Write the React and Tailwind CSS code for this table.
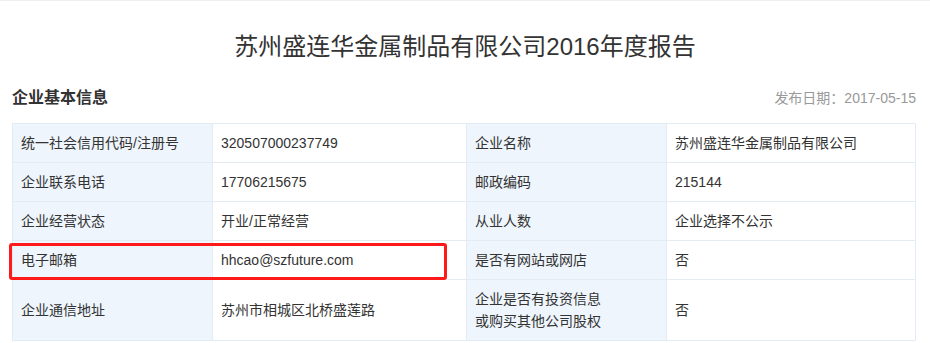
import React from "react";

const rows = [
  ["统一社会信用代码/注册号", "320507000237749", "企业名称", "苏州盛连华金属制品有限公司"],
  ["企业联系电话", "17706215675", "邮政编码", "215144"],
  ["企业经营状态", "开业/正常经营", "从业人数", "企业选择不公示"],
  ["电子邮箱", "hhcao@szfuture.com", "是否有网站或网店", "否"],
];

const label = "bg-[#eef5fc] border-r border-b border-[#e3ebf3] px-2 flex items-center";
const value = "bg-white border-r border-b border-[#e3ebf3] px-2 flex items-center";

export default function App() {
  return (
    <div className="min-h-screen bg-white border-t border-[#eeeeee] text-[#333] font-['Liberation_Sans','Noto_Sans_CJK_SC',sans-serif]">
      <h1 className="pt-[30px] text-center text-[24px] leading-[32px] font-normal">
        苏州盛连华金属制品有限公司2016年度报告
      </h1>

      <div className="mx-[12px] w-[904px] mt-[23px] mb-[13px] flex items-center justify-between h-[24px]">
        <h2 className="text-[16px] font-bold">企业基本信息</h2>
        <span className="text-[14px] text-[#999]">发布日期：2017-05-15</span>
      </div>

      <div className="relative ml-[12px] w-[904px] border-t border-l border-[#e3ebf3] grid grid-cols-[200px_254px_200px_249px] text-[14px]">
        {rows.map((r, i) => (
          <React.Fragment key={i}>
            <div className={`${label} h-[39px]`}>{r[0]}</div>
            <div className={`${value} h-[39px]`}>{r[1]}</div>
            <div className={`${label} h-[39px]`}>{r[2]}</div>
            <div className={`${value} h-[39px]`}>{r[3]}</div>
          </React.Fragment>
        ))}
        <div className={`${label} h-[61px]`}>企业通信地址</div>
        <div className={`${value} h-[61px]`}>苏州市相城区北桥盛莲路</div>
        <div className={`${label} h-[61px] leading-[22px]`}>
          企业是否有投资信息
          <br />
          或购买其他公司股权
        </div>
        <div className={`${value} h-[61px]`}>否</div>

        {/* highlight box around the email row */}
        <div className="absolute left-[-4px] top-[119px] w-[438px] h-[37px] border-[3px] border-[#ff1a1a] rounded-[3px] pointer-events-none" />
      </div>
    </div>
  );
}
